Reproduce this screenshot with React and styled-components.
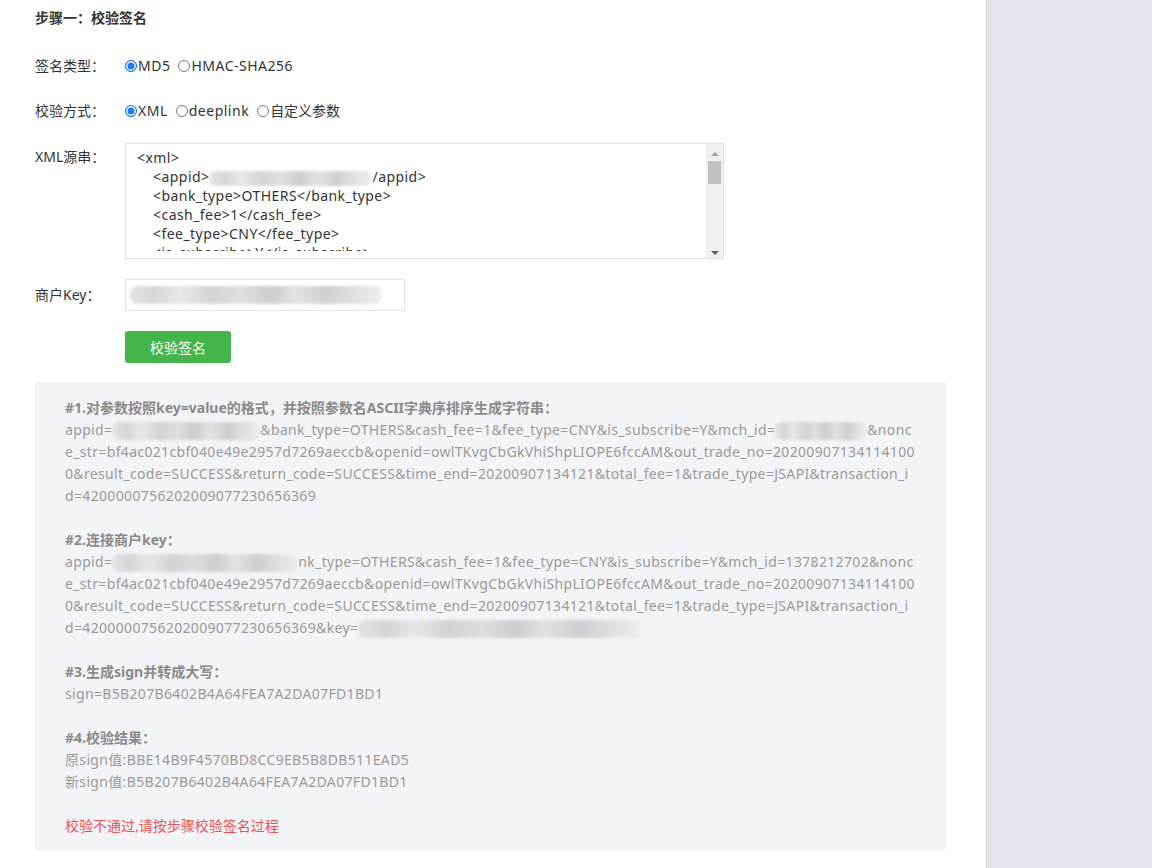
import React from 'react';
import styled, { createGlobalStyle } from 'styled-components';

const GlobalStyle = createGlobalStyle`
  html, body {
    margin: 0;
    padding: 0;
    background: #fff;
  }
  body {
    font-family: "Noto Sans", "Noto Sans CJK SC", sans-serif;
    font-size: 14px;
    color: #333;
  }
`;

const Layout = styled.div`
  display: flex;
  min-height: 868px;
`;

const Main = styled.main`
  width: 986px;
  flex-shrink: 0;
  padding: 7px 40px 0 35px;
  box-sizing: border-box;
  background: #fff;
`;

const Sidebar = styled.aside`
  flex: 1;
  background: #e5e6eb;
  border-left: 1px solid #d6d6da;
`;

const Title = styled.h3`
  margin: 0;
  font-size: 14px;
  font-weight: bold;
  line-height: 22px;
  color: #333;
`;

const Row = styled.div`
  display: flex;
  align-items: ${p => (p.$top ? 'flex-start' : 'center')};
  margin-top: ${p => p.$gap || 20}px;
`;

const Label = styled.div`
  width: 90px;
  flex-shrink: 0;
  line-height: 22px;
  padding-top: ${p => p.$offset || 0}px;
  color: #333;
`;

const RadioGroup = styled.div`
  display: flex;
  align-items: center;
  gap: 8px;
  line-height: 22px;
`;

const Option = styled.label`
  display: flex;
  align-items: center;
  color: #333;
  letter-spacing: ${p => (p.$cjk ? 0 : 0.5)}px;
`;

const Radio = styled.input.attrs({ type: 'radio' })`
  appearance: none;
  width: 12px;
  height: 12px;
  margin: 0 1px 0 0;
  border-radius: 50%;
  border: 1px solid #7a7a7a;
  background: #fff;
  box-sizing: border-box;

  &:checked {
    border-color: #1673e0;
    background: #1a7fea;
    box-shadow: inset 0 0 0 1.5px #fff;
  }
`;

const XmlBox = styled.div`
  display: flex;
  width: 599px;
  height: 116px;
  border: 1px solid #e3e3e6;
  box-sizing: border-box;
  background: #fff;
`;

const XmlText = styled.pre`
  flex: 1;
  margin: 0 0 7px;
  padding: 4px 11px 0;
  overflow: hidden;
  font-family: inherit;
  font-size: 14px;
  line-height: 19px;
  letter-spacing: 0.45px;
  color: #333;
  white-space: pre;
`;

const Indent = styled.div`
  padding-left: 16px;
`;

const ScrollTrack = styled.div`
  width: 17px;
  flex-shrink: 0;
  background: #f0f0f0;
  display: flex;
  flex-direction: column;
  align-items: center;
  padding: 4px 0 3px;
  box-sizing: border-box;
`;

const Arrow = styled.div`
  width: 0;
  height: 0;
  border-left: 4px solid transparent;
  border-right: 4px solid transparent;
  ${p =>
    p.$down
      ? 'border-top: 4px solid #606060; margin-top: auto;'
      : 'border-bottom: 4px solid #a3a3a3; margin-top: 4px;'}
`;

const Thumb = styled.div`
  width: 13px;
  height: 23px;
  margin-top: 5px;
  background: #c1c1c1;
`;

const KeyInput = styled.div`
  width: 280px;
  height: 32px;
  border: 1px solid #e3e3e6;
  box-sizing: border-box;
  display: flex;
  align-items: center;
  padding-left: 4px;
`;

const Blur = styled.span`
  display: inline-block;
  vertical-align: middle;
  width: ${p => p.$w}px;
  height: ${p => p.$h || 14}px;
  border-radius: 7px;
  background: linear-gradient(
    90deg,
    #e2e2e4 0%,
    #d2d2d4 10%,
    #e6e6e8 20%,
    #cfcfd2 32%,
    #dcdcde 44%,
    #c8c8ca 56%,
    #e0e0e2 66%,
    #cbcbce 78%,
    #dedee0 90%,
    #ececee 100%
  );
  filter: blur(1.5px);
  opacity: 0.9;
`;

const Button = styled.button`
  width: 106px;
  height: 32px;
  border: none;
  border-radius: 3px;
  background: #44b549;
  color: #fff;
  font-family: inherit;
  font-size: 14px;
  cursor: pointer;
`;

const ResultBox = styled.section`
  margin-top: 19px;
  width: 911px;
  box-sizing: border-box;
  padding: 15px 30px 14px;
  background: #f3f4f8;
  line-height: 22px;
  color: #9a9a9a;
  letter-spacing: 0.34px;
  word-break: break-all;
`;

const Step = styled.div`
  & + & {
    margin-top: 22px;
  }
`;

const StepTitle = styled.div`
  font-weight: bold;
  color: #8a8a8a;
  letter-spacing: 0;
`;

const Fail = styled.div`
  margin-top: 22px;
  color: #ef5350;
  letter-spacing: 0;
`;

export default function App() {
  return (
    <>
      <GlobalStyle />
      <Layout>
        <Main>
          <Title>步骤一：校验签名</Title>

          <Row $gap={26}>
            <Label>签名类型：</Label>
            <RadioGroup>
              <Option><Radio name="sign" defaultChecked />MD5</Option>
              <Option><Radio name="sign" />HMAC-SHA256</Option>
            </RadioGroup>
          </Row>

          <Row $gap={23}>
            <Label>校验方式：</Label>
            <RadioGroup>
              <Option><Radio name="mode" defaultChecked />XML</Option>
              <Option><Radio name="mode" />deeplink</Option>
              <Option $cjk><Radio name="mode" />自定义参数</Option>
            </RadioGroup>
          </Row>

          <Row $top $gap={21}>
            <Label $offset={3}>XML源串：</Label>
            <XmlBox>
              <XmlText>
                <div>{'<xml>'}</div>
                <Indent>{'<appid>'}<Blur $w={163} $h={15} />{'/appid>'}</Indent>
                <Indent>{'<bank_type>OTHERS</bank_type>'}</Indent>
                <Indent>{'<cash_fee>1</cash_fee>'}</Indent>
                <Indent>{'<fee_type>CNY</fee_type>'}</Indent>
                <Indent>{'<is_subscribe>Y</is_subscribe>'}</Indent>
              </XmlText>
              <ScrollTrack>
                <Arrow />
                <Thumb />
                <Arrow $down />
              </ScrollTrack>
            </XmlBox>
          </Row>

          <Row>
            <Label>商户Key：</Label>
            <KeyInput>
              <Blur $w={252} $h={18} />
            </KeyInput>
          </Row>

          <Row>
            <Label />
            <Button>校验签名</Button>
          </Row>

          <ResultBox>
            <Step>
              <StepTitle>#1.对参数按照key=value的格式，并按照参数名ASCII字典序排序生成字符串：</StepTitle>
              appid=<Blur $w={148} $h={18} />&amp;bank_type=OTHERS&amp;cash_fee=1&amp;fee_type=CNY&amp;is_subscribe=Y&amp;mch_id=<Blur $w={92} $h={18} />&amp;nonce_str=bf4ac021cbf040e49e2957d7269aeccb&amp;openid=owlTKvgCbGkVhiShpLIOPE6fccAM&amp;out_trade_no=202009071341141000&amp;result_code=SUCCESS&amp;return_code=SUCCESS&amp;time_end=20200907134121&amp;total_fee=1&amp;trade_type=JSAPI&amp;transaction_id=4200000756202009077230656369
            </Step>
            <Step>
              <StepTitle>#2.连接商户key：</StepTitle>
              appid=<Blur $w={186} $h={18} />nk_type=OTHERS&amp;cash_fee=1&amp;fee_type=CNY&amp;is_subscribe=Y&amp;mch_id=1378212702&amp;nonce_str=bf4ac021cbf040e49e2957d7269aeccb&amp;openid=owlTKvgCbGkVhiShpLIOPE6fccAM&amp;out_trade_no=202009071341141000&amp;result_code=SUCCESS&amp;return_code=SUCCESS&amp;time_end=20200907134121&amp;total_fee=1&amp;trade_type=JSAPI&amp;transaction_id=4200000756202009077230656369&amp;key=<Blur $w={283} $h={18} />
            </Step>
            <Step>
              <StepTitle>#3.生成sign并转成大写：</StepTitle>
              sign=B5B207B6402B4A64FEA7A2DA07FD1BD1
            </Step>
            <Step>
              <StepTitle>#4.校验结果：</StepTitle>
              <div>原sign值:BBE14B9F4570BD8CC9EB5B8DB511EAD5</div>
              <div>新sign值:B5B207B6402B4A64FEA7A2DA07FD1BD1</div>
            </Step>
            <Fail>校验不通过,请按步骤校验签名过程</Fail>
          </ResultBox>
        </Main>
        <Sidebar />
      </Layout>
    </>
  );
}
